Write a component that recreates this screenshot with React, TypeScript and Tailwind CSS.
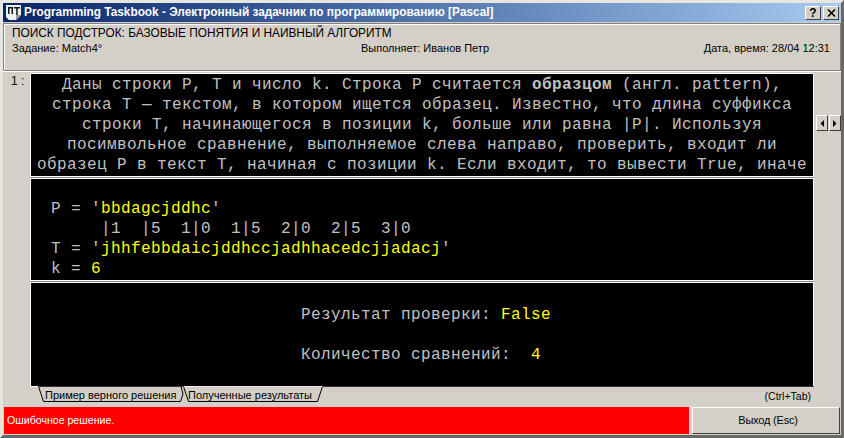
const ui = { fontFamily: '"Liberation Sans", Arial, sans-serif' };

function Panel({ className = "", children }: { className?: string; children: React.ReactNode }) {
  return (
    <div className={`bg-black border border-white font-['Liberation_Mono',monospace] text-[16px] leading-[20px] tracking-[0.4px] text-[#c0c0c0] overflow-hidden whitespace-pre ${className}`}>
      {children}
    </div>
  );
}

function CaptionButton({ children }: { children: React.ReactNode }) {
  return (
    <div className="w-[16px] h-[14px] bg-[#d4d0c8] border border-t-white border-l-white border-r-[#404040] border-b-[#404040] flex items-center justify-center">
      {children}
    </div>
  );
}

function ScrollButton({ left }: { left?: boolean }) {
  return (
    <div className="w-[12px] h-[16px] bg-[#d4d0c8] border border-t-white border-l-white border-r-[#404040] border-b-[#404040] flex items-center justify-center">
      <svg width="4" height="7" viewBox="0 0 4 7">
        <path d={left ? "M4 0 L0.5 3.5 L4 7 Z" : "M0 0 L3.5 3.5 L0 7 Z"} fill="#000" />
      </svg>
    </div>
  );
}

export default function App() {
  return (
    <div
      className="w-[844px] h-[438px] bg-[#d4d0c8] border-[3px] border-t-[#e8e6e1] border-l-[#e8e6e1] border-r-[#6a6864] border-b-[#6a6864] flex flex-col overflow-hidden"
      style={ui}
    >
      <div className="h-[19px] shrink-0 flex items-center pl-[3px] pr-[2px] bg-gradient-to-r from-[#0a246a] to-[#a6caf0]">
        <svg className="mr-[3px] shrink-0" width="15" height="15" viewBox="0 0 15 15">
          <path d="M0 0H15V10L10 15H3L0 12Z" fill="#f0f0f0" />
          <path d="M10 15V10H15Z" fill="#9a9a9a" />
          <path d="M2 2H7V9H5.5V3.5H3.5V9H2ZM8 2H14V3.5H11.7V10H10.2V3.5H8Z" fill="#10131f" />
        </svg>
        <span className="text-[11.85px] font-bold text-white whitespace-nowrap">
          Programming Taskbook - Электронный задачник по программированию [Pascal]
        </span>
        <div className="ml-auto flex gap-[2px]">
          <CaptionButton>
            <span className="text-[12px] font-bold text-black leading-none">?</span>
          </CaptionButton>
          <CaptionButton>
            <svg width="9" height="8" viewBox="0 0 9 8">
              <path d="M1 0.5 L8 7.5 M8 0.5 L1 7.5" stroke="#000" strokeWidth="1.5" />
            </svg>
          </CaptionButton>
        </div>
      </div>

      <div className="h-[48px] shrink-0 mt-px border border-[#808080] shadow-[inset_1px_1px_0_#fff,0_1px_0_#fff] pl-[8px] pr-[10px] pt-[2px] text-black whitespace-nowrap leading-[15px]">
        <div className="text-[11.85px]">ПОИСК ПОДСТРОК: БАЗОВЫЕ ПОНЯТИЯ И НАИВНЫЙ АЛГОРИТМ</div>
        <div className="grid grid-cols-3 text-[11px]">
          <div>Задание: Match4°</div>
          <div className="text-center ml-[8px]">Выполняет: Иванов Петр</div>
          <div className="text-right">Дата, время: 28/04 12:31</div>
        </div>
      </div>

      <div className="flex mt-[2px] flex-1 min-h-0">
        <div className="w-[27px] pl-[8px] pt-[1px] text-[12px] leading-[15px] text-black whitespace-pre">1 :</div>
        <div className="w-[784px] flex flex-col gap-[1px] bg-[#808080] h-fit">
          <Panel className="h-[104px] text-center pt-[1px]">
            <div>Даны строки P, T и число k. Строка P считается <b>образцом</b> (англ. pattern),</div>
            <div>строка T — текстом, в котором ищется образец. Известно, что длина суффикса</div>
            <div>строки T, начинающегося в позиции k, больше или равна |P|. Используя</div>
            <div>посимвольное сравнение, выполняемое слева направо, проверить, входит ли</div>
            <div>образец P в текст T, начиная с позиции k. Если входит, то вывести True, иначе</div>
          </Panel>
          <Panel className="h-[103px] pl-[20px] pt-[20px] leading-[20.4px]">
            <div>P = '<span className="text-[#ffff00]">bbdagcjddhc</span>'</div>
            <div>     |1  |5  1|0  1|5  2|0  2|5  3|0</div>
            <div>T = '<span className="text-[#ffff00]">jhhfebbdaicjddhccjadhhacedcjjadacj</span>'</div>
            <div>k = <span className="text-[#ffff00]">6</span></div>
          </Panel>
          <Panel className="h-[105px] pl-[270px] pt-[22px]">
            <div>Результат проверки: <span className="text-[#ffff00]">False</span></div>
            <div className="mt-[20px]">Количество сравнений:  <span className="text-[#ffff00]">4</span></div>
          </Panel>
        </div>
        <div className="flex gap-[1px] ml-[2px] mt-[42px] h-[16px]">
          <ScrollButton left />
          <ScrollButton />
        </div>
      </div>

      <div className="h-[18px] shrink-0 flex items-start pl-[35px] pr-[27px] text-black">
        <div className="relative w-[146px] h-[17px] flex items-center pl-[7px] pt-[2px] text-[11px] z-10">
          <svg className="absolute inset-0" width="146" height="17" viewBox="0 0 146 17">
            <path d="M0.5 0.5 L5.5 15.5 L142.5 15.5 L145 8 L143 0.5" fill="#d4d0c8" stroke="#000" />
            <path d="M0 0.5 H145" stroke="#333" />
          </svg>
          <span className="relative whitespace-nowrap">Пример верного решения</span>
        </div>
        <div className="relative w-[140px] h-[17px] -ml-[1px] flex items-center pl-[5px] pt-[2px] text-[11px] z-20">
          <svg className="absolute inset-0" width="140" height="17" viewBox="0 0 140 17">
            <path d="M0.5 0.5 L5.5 15.5 L134.5 15.5 L139.5 0.5" fill="#d4d0c8" stroke="#000" />
          </svg>
          <span className="relative whitespace-nowrap">Полученные результаты</span>
        </div>
        <div className="flex-1 h-[18px] border-t border-[#333] text-right pr-[3px] pt-[2px] text-[10.5px] leading-[14px]">(Ctrl+Tab)</div>
      </div>

      <div className="h-[27px] mt-[3px] mb-[1px] shrink-0 flex gap-[3px] pl-[1px] pr-[1px]">
        <div className="w-[685px] bg-[#ff0000] text-white text-[10.6px] flex items-center pl-[3px]">Ошибочное решение.</div>
        <div className="flex-1 bg-[#d4d0c8] border border-t-white border-l-white border-r-[#404040] border-b-[#404040] flex items-center justify-center pl-[4px] text-[11px] tracking-[-0.2px] text-black">
          Выход (Esc)
        </div>
      </div>
    </div>
  );
}
